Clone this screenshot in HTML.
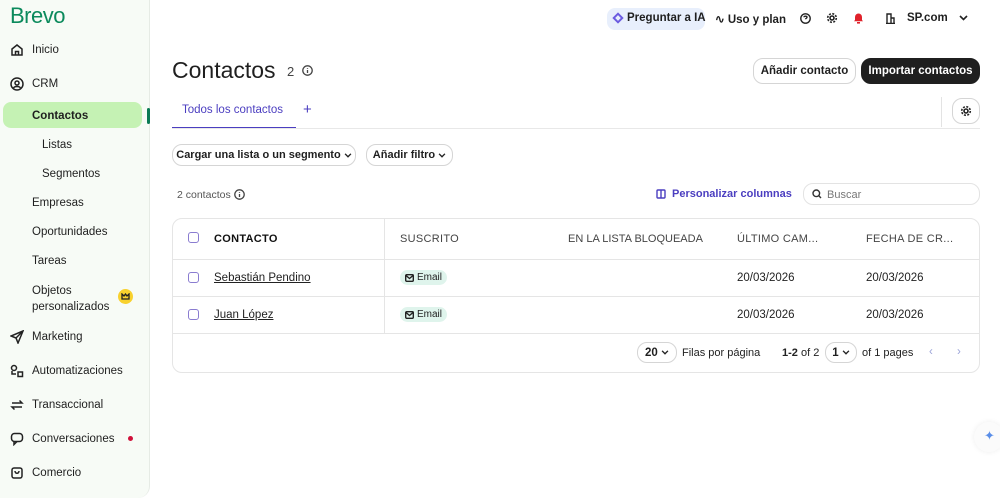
<!DOCTYPE html>
<html><head><meta charset="utf-8"><style>
*{box-sizing:border-box;margin:0;padding:0}
body{width:1000px;height:498px;overflow:hidden;background:#fff;font-family:"Liberation Sans",sans-serif;color:#1f1f1f;position:relative;font-size:12px;white-space:nowrap}
.side{position:absolute;left:0;top:0;width:150px;height:498px;background:#f7fbf6;border-right:1px solid #e6ebe5;border-bottom-right-radius:12px}
.logo{position:absolute;left:10px;top:3px;font-size:22px;color:#0b8a5c;letter-spacing:-0.5px}
.ni{position:absolute;left:32px;font-size:11.5px;color:#1f1f1f}
.ic{position:absolute;left:10px}
.act{position:absolute;left:3px;top:102px;width:139px;height:26px;background:#c5f2b4;border-radius:8px}
.top{position:absolute;font-size:11.5px;font-weight:bold}
.btn{position:absolute;border:1px solid #d5d5d5;border-radius:10px;font-weight:bold;font-size:11.5px;display:flex;align-items:center;justify-content:center}
.th{position:absolute;top:233px;font-size:11px;color:#444;letter-spacing:.3px}
.cb{position:absolute;left:188px;width:11px;height:11px;border:1.5px solid #8a7cd0;border-radius:3px}
.tag{position:absolute;left:400px;width:47px;height:15px;background:#dff4ec;border-radius:8px;font-size:10px;display:flex;align-items:center;padding-left:5px;gap:3px}
.d{position:absolute;font-size:11.5px;color:#222}
</style></head><body>
<div class="side">
<div class="logo">Brevo</div>
<svg class="ic" style="top:43px" width="14" height="14" viewBox="0 0 14 14" fill="none" stroke="#222" stroke-width="1.5"><path d="M2 6 7 2l5 4v6H2z M5.5 12V8.5h3V12"/></svg>
<div class="ni" style="top:44px">Inicio</div>
<svg class="ic" style="top:77px" width="14" height="14" viewBox="0 0 14 14" fill="none" stroke="#222" stroke-width="1.5"><circle cx="7" cy="7" r="6"/><circle cx="7" cy="6" r="2"/><path d="M3.5 11c1-2 6-2 7 0"/></svg>
<div class="ni" style="top:78px">CRM</div>
<div class="act"></div>
<div style="position:absolute;left:147px;top:108px;width:3px;height:16px;background:#0b7a55;border-radius:2px"></div>
<div class="ni" style="top:110px;font-weight:bold">Contactos</div>
<div class="ni" style="top:139px;left:42px">Listas</div>
<div class="ni" style="top:168px;left:42px">Segmentos</div>
<div class="ni" style="top:197px">Empresas</div>
<div class="ni" style="top:226px">Oportunidades</div>
<div class="ni" style="top:255px">Tareas</div>
<div class="ni" style="top:283px;line-height:16px">Objetos<br>personalizados</div>
<div style="position:absolute;left:118px;top:289px;width:15px;height:15px;border-radius:50%;background:#f8d12e"></div>
<svg style="position:absolute;left:121px;top:293px" width="9" height="7" viewBox="0 0 9 7" fill="none" stroke="#222" stroke-width="1.3"><path d="M1 6V1l2 2 1.5-2L6 3l2-2v5z"/></svg>
<svg class="ic" style="top:330px" width="14" height="14" viewBox="0 0 14 14" fill="none" stroke="#222" stroke-width="1.5"><path d="M13 1 1 6l5 2 2 5z M6 8l7-7"/></svg>
<div class="ni" style="top:331px">Marketing</div>
<svg class="ic" style="top:364px" width="14" height="14" viewBox="0 0 14 14" fill="none" stroke="#222" stroke-width="1.5"><circle cx="4" cy="4" r="2.5"/><rect x="8" y="8" width="4.5" height="4.5"/><path d="M2 7v3h4"/></svg>
<div class="ni" style="top:365px">Automatizaciones</div>
<svg class="ic" style="top:398px" width="14" height="14" viewBox="0 0 14 14" fill="none" stroke="#222" stroke-width="1.5"><path d="M2 5h10l-2.5-2.5M12 9H2l2.5 2.5"/></svg>
<div class="ni" style="top:399px">Transaccional</div>
<svg class="ic" style="top:432px" width="14" height="14" viewBox="0 0 14 14" fill="none" stroke="#222" stroke-width="1.5"><rect x="1.5" y="1.5" width="11" height="8" rx="3"/><path d="M4 9.5v3l3-3"/></svg>
<div class="ni" style="top:433px">Conversaciones</div>
<div style="position:absolute;left:128px;top:436px;width:5px;height:5px;border-radius:50%;background:#d0103a"></div>
<svg class="ic" style="top:466px" width="14" height="14" viewBox="0 0 14 14" fill="none" stroke="#222" stroke-width="1.5"><rect x="2" y="2" width="10" height="10" rx="2"/><path d="M5 5c0 3 4 3 4 0"/></svg>
<div class="ni" style="top:467px">Comercio</div>
</div>

<div style="position:absolute;left:607px;top:8px;width:98px;height:22px;background:#e8effc;border-radius:8px"></div>
<div style="position:absolute;left:614px;top:14px;width:8px;height:8px;border:2px solid #6b5be0;transform:rotate(45deg)"></div>
<div class="top" style="left:627px;top:12px">Preguntar a IA</div>
<div class="top" style="left:715px;top:12px">∿ Uso y plan</div>
<svg style="position:absolute;left:800px;top:13px" width="11" height="11" viewBox="0 0 11 11" fill="none" stroke="#222" stroke-width="1.4"><circle cx="5.5" cy="5.5" r="4.7"/><path d="M4 4.3c0-1.5 3-1.5 3 0 0 1-1.5 1-1.5 2"/></svg>
<svg style="position:absolute;left:826px;top:12px" width="12" height="12" viewBox="0 0 12 12" fill="none" stroke="#222" stroke-width="1.6"><circle cx="6" cy="6" r="2"/><circle cx="6" cy="6" r="4.3" stroke-dasharray="2 1.4"/></svg>
<svg style="position:absolute;left:853px;top:12px" width="11" height="12" viewBox="0 0 11 12"><path d="M2 8V5a3.5 3.5 0 0 1 7 0v3l1 1.2H1z" fill="#e0222b"/><rect x="4" y="10" width="3" height="1.6" fill="#e0222b"/></svg>
<svg style="position:absolute;left:885px;top:13px" width="11" height="11" viewBox="0 0 11 11" fill="none" stroke="#222" stroke-width="1.4"><path d="M1 10.5h9M2 10V1h4v9M6 5h3v5"/></svg>
<div class="top" style="left:907px;top:12px">SP.com</div>
<svg style="position:absolute;left:959px;top:15px" width="9" height="6" viewBox="0 0 9 6" fill="none" stroke="#222" stroke-width="1.6"><path d="M1 1l3.5 3.5L8 1"/></svg>

<div style="position:absolute;left:172px;top:57px;font-size:23px">Contactos</div>
<div style="position:absolute;left:287px;top:64px;font-size:13px;color:#444">2</div>
<svg style="position:absolute;left:302px;top:65px" width="11" height="11" viewBox="0 0 11 11" fill="none" stroke="#444" stroke-width="1.3"><circle cx="5.5" cy="5.5" r="4.7"/><path d="M5.5 5v3M5.5 3v.8"/></svg>
<div class="btn" style="left:753px;top:58px;width:103px;height:26px">Añadir contacto</div>
<div class="btn" style="left:861px;top:58px;width:119px;height:26px;background:#1f1f1f;color:#fff;border-color:#1f1f1f">Importar contactos</div>

<div style="position:absolute;left:182px;top:104px;font-size:11.5px;color:#4b3ec0">Todos los contactos</div>
<div style="position:absolute;left:303px;top:101px;font-size:15px;color:#4b3ec0">+</div>
<div style="position:absolute;left:172px;top:127px;width:124px;height:2px;background:#4b3ec0"></div>
<div style="position:absolute;left:172px;top:128px;width:808px;height:1px;background:#e8e8e8"></div>
<div style="position:absolute;left:941px;top:97px;width:1px;height:30px;background:#e3e3e3"></div>
<div class="btn" style="left:952px;top:98px;width:28px;height:26px">
<svg width="12" height="12" viewBox="0 0 12 12" fill="none" stroke="#222" stroke-width="1.6"><circle cx="6" cy="6" r="2"/><circle cx="6" cy="6" r="4.3" stroke-dasharray="2 1.4"/></svg></div>

<div class="btn" style="left:172px;top:144px;width:184px;height:22px;font-size:11px">Cargar una lista o un segmento&nbsp;<svg width="8" height="5" viewBox="0 0 9 6" fill="none" stroke="#222" stroke-width="1.6"><path d="M1 1l3.5 3.5L8 1"/></svg></div>
<div class="btn" style="left:366px;top:144px;width:87px;height:22px;font-size:11px">Añadir filtro&nbsp;<svg width="8" height="5" viewBox="0 0 9 6" fill="none" stroke="#222" stroke-width="1.6"><path d="M1 1l3.5 3.5L8 1"/></svg></div>
<div style="position:absolute;left:177px;top:189px;font-size:10.5px;color:#555">2 contactos</div>
<svg style="position:absolute;left:234px;top:189px" width="11" height="11" viewBox="0 0 11 11" fill="none" stroke="#444" stroke-width="1.3"><circle cx="5.5" cy="5.5" r="4.7"/><path d="M5.5 5v3M5.5 3v.8"/></svg>
<svg style="position:absolute;left:656px;top:189px" width="10" height="10" viewBox="0 0 10 10" fill="none" stroke="#4b3ec0" stroke-width="1.4"><rect x="1" y="1" width="8" height="8" rx="1"/><path d="M5 1v8"/></svg>
<div style="position:absolute;left:672px;top:188px;font-size:11px;color:#4b3ec0;font-weight:bold">Personalizar columnas</div>
<div style="position:absolute;left:803px;top:183px;width:177px;height:22px;border:1px solid #e3e3e3;border-radius:10px;font-size:11px;color:#777;padding:5px 0 0 23px">Buscar</div>
<svg style="position:absolute;left:812px;top:189px" width="10" height="10" viewBox="0 0 10 10" fill="none" stroke="#333" stroke-width="1.4"><circle cx="4.3" cy="4.3" r="3.3"/><path d="M6.8 6.8 9 9"/></svg>

<div style="position:absolute;left:172px;top:218px;width:808px;height:155px;border:1px solid #e5e5e5;border-radius:10px"></div>
<div style="position:absolute;left:172px;top:259px;width:808px;height:1px;background:#e5e5e5"></div>
<div style="position:absolute;left:172px;top:296px;width:808px;height:1px;background:#e5e5e5"></div>
<div style="position:absolute;left:172px;top:333px;width:808px;height:1px;background:#e5e5e5"></div>
<div style="position:absolute;left:384px;top:219px;width:1px;height:114px;background:#e5e5e5"></div>
<div class="cb" style="top:232px"></div><div class="cb" style="top:272px"></div><div class="cb" style="top:309px"></div>
<div class="th" style="left:214px;color:#111;font-weight:bold">CONTACTO</div>
<div class="th" style="left:400px">SUSCRITO</div>
<div class="th" style="left:568px;letter-spacing:0">EN LA LISTA BLOQUEADA</div>
<div class="th" style="left:737px">ÚLTIMO CAM...</div>
<div class="th" style="left:866px">FECHA DE CR...</div>
<div class="d" style="left:214px;top:272px;text-decoration:underline">Sebastián Pendino</div>
<div class="d" style="left:214px;top:309px;text-decoration:underline">Juan López</div>
<div class="tag" style="top:270px"><svg width="9" height="8" viewBox="0 0 9 8" fill="none" stroke="#222" stroke-width="1.4"><rect x=".7" y=".7" width="7.6" height="6.6" rx="1"/><path d="M1 1.5l3.5 3L8 1.5"/></svg>Email</div>
<div class="tag" style="top:307px"><svg width="9" height="8" viewBox="0 0 9 8" fill="none" stroke="#222" stroke-width="1.4"><rect x=".7" y=".7" width="7.6" height="6.6" rx="1"/><path d="M1 1.5l3.5 3L8 1.5"/></svg>Email</div>
<div class="d" style="left:737px;top:272px">20/03/2026</div><div class="d" style="left:866px;top:272px">20/03/2026</div>
<div class="d" style="left:737px;top:309px">20/03/2026</div><div class="d" style="left:866px;top:309px">20/03/2026</div>

<div class="btn" style="left:637px;top:342px;width:40px;height:21px">20&nbsp;<svg width="8" height="5" viewBox="0 0 9 6" fill="none" stroke="#222" stroke-width="1.6"><path d="M1 1l3.5 3.5L8 1"/></svg></div>
<div class="d" style="left:682px;top:347px;font-size:11px">Filas por página</div>
<div class="d" style="left:782px;top:347px;font-size:11px"><b>1-2</b> of 2</div>
<div class="btn" style="left:825px;top:342px;width:32px;height:21px">1&nbsp;<svg width="8" height="5" viewBox="0 0 9 6" fill="none" stroke="#222" stroke-width="1.6"><path d="M1 1l3.5 3.5L8 1"/></svg></div>
<div class="d" style="left:862px;top:347px;font-size:11px">of 1 pages</div>
<div class="d" style="left:929px;top:346px;color:#9aa3d8">‹</div>
<div class="d" style="left:957px;top:346px;color:#9aa3d8">›</div>
<div style="position:absolute;left:974px;top:422px;width:30px;height:30px;border-radius:50%;background:#fbfbfb;box-shadow:0 0 6px #eee;color:#5a8ee8;font-size:13px;padding:6px 0 0 10px">✦</div>
</body></html>
